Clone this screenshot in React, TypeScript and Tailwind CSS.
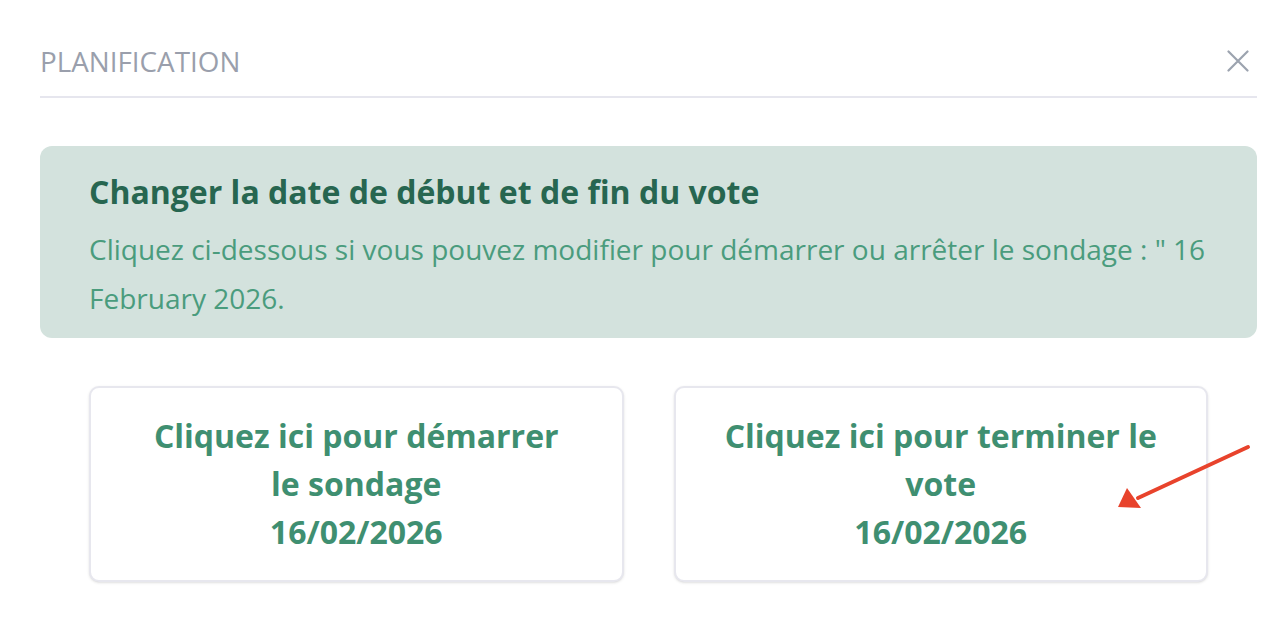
import React from "react";

function CloseIcon() {
  return (
    <svg width="22" height="22" viewBox="0 0 22 22" fill="none" stroke="#9ca3af" strokeWidth="2.2" strokeLinecap="round">
      <path d="M1.5 1.5 L20.5 20.5 M20.5 1.5 L1.5 20.5" />
    </svg>
  );
}

function ActionCard({ lines }: { lines: string[] }) {
  return (
    <button className="rounded-[10px] border-2 border-[#e7e7ee] bg-white px-[47px] py-6 text-center text-[32px] font-bold leading-[48px] text-[#3f8f71] shadow-sm">
      {lines.map((l) => (
        <span key={l} className="block">
          {l}
        </span>
      ))}
    </button>
  );
}

export default function App() {
  return (
    <div className="relative min-h-screen w-full bg-white pl-10 pr-[31px] pt-[43px] font-['Open_Sans',sans-serif]">
      {/* header */}
      <div className="flex items-center justify-between border-b-2 border-[#e6e6ee] pb-[17px]">
        <h2 className="text-[27.8px] leading-[36px] text-[#9a9fac]">PLANIFICATION</h2>
        <button className="mr-[8px]">
          <CloseIcon />
        </button>
      </div>

      {/* info box */}
      <div className="mt-[48px] rounded-[12px] bg-[#d3e2dd] px-[49px] pt-[24px] pb-[15px]">
        <h3 className="text-[32px] font-bold leading-[44px] text-[#276650]">
          Changer la date de début et de fin du vote
        </h3>
        <p className="mt-[11px] text-[28px] leading-[49px] text-[#4a9c7d]">
          Cliquez ci-dessous si vous pouvez modifier pour démarrer ou arrêter le sondage : " 16 February 2026.
        </p>
      </div>

      {/* actions */}
      <div className="mt-[48px] grid grid-cols-2 gap-[50px] px-[49px]">
        <ActionCard lines={["Cliquez ici pour démarrer le sondage", "16/02/2026"]} />
        <ActionCard lines={["Cliquez ici pour terminer le vote", "16/02/2026"]} />
      </div>

      {/* annotation arrow */}
      <svg className="pointer-events-none absolute left-[1110px] top-[440px]" width="150" height="80" viewBox="0 0 150 80">
        <line x1="138" y1="7" x2="28" y2="58" stroke="#e8432c" strokeWidth="4" strokeLinecap="round" />
        <polygon points="8,67 17,48 31,68" fill="#e8432c" />
      </svg>
    </div>
  );
}
